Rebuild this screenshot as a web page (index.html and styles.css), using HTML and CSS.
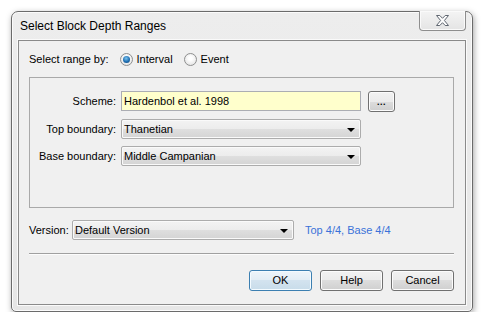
FILE: index.html
```html
<!DOCTYPE html>
<html lang="en">
<head>
    <meta charset="UTF-8">
    <meta name="viewport" content="width=device-width, initial-scale=1.0">
    <title>Select Block Depth Ranges</title>
    <link rel="stylesheet" href="styles.css">
</head>
<body>
    <div class="window">
        <div class="titlebar">
            <span class="title">Select Block Depth Ranges</span>
            <div class="close-btn">
                <svg width="13" height="11" viewBox="0 0 13 11">
                    <polygon points="0.5,0.5 3.8,0.5 6.5,3.3 9.2,0.5 12.5,0.5 8.4,5.5 12.5,10.5 9.2,10.5 6.5,7.7 3.8,10.5 0.5,10.5 4.6,5.5" fill="#fdfdfd" stroke="#5f6670" stroke-width="1" stroke-linejoin="round"/>
                </svg>
            </div>
        </div>

        <div class="client">
            <div class="range-row">
                <span class="range-label">Select range by:</span>
                <span class="radio checked"></span>
                <span class="radio-text">Interval</span>
                <span class="radio"></span>
                <span class="radio-text">Event</span>
            </div>

            <div class="group">
                <div class="form-grid">
                    <span class="field-label">Scheme:</span>
                    <div class="text-field">Hardenbol et al. 1998</div>
                    <div class="small-btn">...</div>

                    <span class="field-label">Top boundary:</span>
                    <div class="combo">Thanetian<span class="arrow"></span></div>
                    <span></span>

                    <span class="field-label">Base boundary:</span>
                    <div class="combo">Middle Campanian<span class="arrow"></span></div>
                    <span></span>
                </div>
            </div>

            <div class="version-row">
                <span class="version-label">Version:</span>
                <div class="combo version-combo">Default Version<span class="arrow"></span></div>
                <span class="status-link">Top 4/4, Base 4/4</span>
            </div>

            <div class="separator"></div>

            <div class="buttons">
                <div class="btn default">OK</div>
                <div class="btn">Help</div>
                <div class="btn">Cancel</div>
            </div>
        </div>
    </div>
</body>
</html>
```

FILE: styles.css
```css
body {
    margin: 0;
    background-color: #ffffff;
    font-family: "Liberation Sans", Arial, sans-serif;
    font-size: 11px;
    color: #000000;
}

.window {
    box-sizing: border-box;
    width: 462px;
    height: 301px;
    margin: 11px 0 0 11px;
    padding: 0 6px 6px 6px;
    border: 1px solid #6b6b6b;
    border-radius: 7px 7px 5px 5px;
    background: linear-gradient(#ededed, #e6e6e6);
    box-shadow: inset 0 0 0 1px #fbfbfb, 1px 2px 6px rgba(0, 0, 0, 0.35);
}

.titlebar {
    display: flex;
    justify-content: space-between;
    align-items: center;
    height: 28px;
}

.title {
    margin-left: 2px;
    font-size: 12px;
    color: #000000;
}

.close-btn {
    align-self: flex-start;
    box-sizing: border-box;
    width: 47px;
    height: 20px;
    margin-top: -1px;
    border: 1px solid #8e8e8e;
    border-top: none;
    border-radius: 0 0 4px 4px;
    background: linear-gradient(#f4f4f4, #e4e4e4);
    box-shadow: inset 0 0 0 1px #fafafa;
    display: flex;
    justify-content: center;
    align-items: center;
}

.client {
    box-sizing: border-box;
    height: 265px;
    padding: 8px 11px 0 10px;
    border: 1px solid #8a8a8a;
    background-color: #f0f0f0;
    box-shadow: 0 0 0 1px #fafafa;
}

.range-row {
    display: flex;
    align-items: center;
    height: 20px;
}

.range-label {
    margin-right: 11px;
}

.radio {
    box-sizing: border-box;
    width: 13px;
    height: 13px;
    border: 1px solid #8e8f8f;
    border-radius: 50%;
    background: radial-gradient(circle at 50% 40%, #ffffff 20%, #dcdcdc 100%);
    display: flex;
    justify-content: center;
    align-items: center;
}

.radio.checked::after {
    content: "";
    width: 7px;
    height: 7px;
    border-radius: 50%;
    background: radial-gradient(circle at 45% 35%, #7cc4ee 0%, #1f6fb3 55%, #123f6c 100%);
}

.radio-text {
    margin-left: 4px;
    margin-right: 11px;
}

.group {
    box-sizing: border-box;
    height: 131px;
    margin-top: 8px;
    padding-top: 13px;
    border: 1px solid #a9a9a9;
}

.form-grid {
    display: grid;
    grid-template-columns: 86px 240px 27px;
    grid-template-rows: 21px 20px 20px;
    row-gap: 7px;
    column-gap: 5px;
    align-items: start;
}

.field-label {
    text-align: right;
    line-height: 20px;
}

.text-field {
    box-sizing: border-box;
    height: 20px;
    padding-left: 2px;
    line-height: 18px;
    border: 1px solid #abadb3;
    background-color: #ffffcc;
}

.small-btn {
    box-sizing: border-box;
    width: 27px;
    height: 21px;
    margin-left: 2px;
    border: 1px solid #707070;
    border-radius: 3px;
    background: linear-gradient(#f2f2f2 0%, #ebebeb 50%, #dddddd 50%, #cfcfcf 100%);
    box-shadow: inset 0 0 0 1px #fcfcfc;
    text-align: center;
    line-height: 20px;
    font-weight: bold;
    font-size: 9px;
    letter-spacing: 0.5px;
}

.combo {
    position: relative;
    box-sizing: border-box;
    height: 20px;
    padding-left: 2px;
    line-height: 18px;
    border: 1px solid #acacac;
    border-radius: 2px;
    background: linear-gradient(#f3f3f3 0%, #ececec 50%, #dfdfdf 50%, #d4d4d4 100%);
    box-shadow: inset 0 0 0 1px #fafafa;
}

.arrow {
    position: absolute;
    right: 5px;
    top: 8px;
    width: 0;
    height: 0;
    border-left: 4px solid transparent;
    border-right: 4px solid transparent;
    border-top: 4px solid #000000;
}

.version-row {
    display: flex;
    align-items: center;
    margin-top: 12px;
    height: 20px;
}

.version-label {
    width: 43px;
}

.version-combo {
    width: 222px;
}

.status-link {
    margin-left: 11px;
    color: #3a72d9;
}

.separator {
    margin-top: 13px;
    height: 1px;
    background-color: #a0a0a0;
    border-bottom: 1px solid #fcfcfc;
}

.buttons {
    display: flex;
    justify-content: flex-end;
    gap: 8px;
    margin-top: 15px;
}

.btn {
    box-sizing: border-box;
    width: 63px;
    height: 21px;
    border: 1px solid #707070;
    border-radius: 3px;
    background: linear-gradient(#f2f2f2 0%, #ebebeb 50%, #dddddd 50%, #cfcfcf 100%);
    box-shadow: inset 0 0 0 1px #fcfcfc;
    text-align: center;
    line-height: 19px;
    font-size: 11px;
}

.btn.default {
    border-color: #3c7fb1;
    background: linear-gradient(#eef5fa 0%, #e2edf5 50%, #d3e3ef 50%, #c8dcea 100%);
    box-shadow: inset 0 0 0 1px #f4fbff;
}
```
